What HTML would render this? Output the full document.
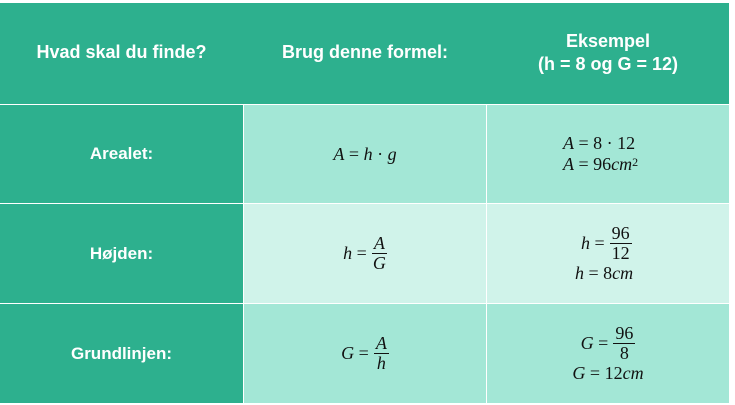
<!DOCTYPE html>
<html><head><style>
body{margin:0;width:735px;height:405px;background:#fff;position:relative;overflow:hidden}
.c{position:absolute;display:flex;align-items:center;justify-content:center;flex-direction:column;box-sizing:border-box}
.h{background:#2db08e;color:#fff;font:bold 18px "Liberation Sans",sans-serif;text-align:center;line-height:23px}
.l{background:#2db08e;color:#fff;font:bold 17px "Liberation Sans",sans-serif}
.a{background:#a3e7d6}.b{background:#d0f3ea}
.m{font:18px "Liberation Serif",serif;color:#111;white-space:nowrap;line-height:21px;display:flex;align-items:center}
.m i{font-style:italic}
.f{display:inline-flex;flex-direction:column;align-items:center;margin-left:5px;line-height:19px}
.f span:first-child{border-bottom:1px solid #111;padding:0 2px}
sup{font-size:12px;position:relative;top:-3px;vertical-align:top;line-height:12px}
</style></head><body>
<div class="c h" style="left:0;top:3px;width:729px;height:101px"></div>
<div class="c h" style="left:0;top:3px;width:243px;height:101px;padding-bottom:2px">Hvad skal du finde?</div>
<div class="c h" style="left:244px;top:3px;width:242px;height:101px;padding-bottom:2px">Brug denne formel:</div>
<div class="c h" style="left:487px;top:3px;width:242px;height:101px;padding-bottom:2px">Eksempel<br>(h = 8 og G = 12)</div>

<div class="c l" style="left:0;top:105px;width:243px;height:98px">Arealet:</div>
<div class="c a" style="left:244px;top:105px;width:242px;height:98px"><div class="m"><i>A</i>&nbsp;=&nbsp;<i>h</i>&nbsp;·&nbsp;<i>g</i></div></div>
<div class="c a" style="left:487px;top:105px;width:242px;height:98px;align-items:flex-start;padding-left:76px"><div class="m"><i>A</i>&nbsp;=&nbsp;8&nbsp;·&nbsp;12</div><div class="m"><i>A</i>&nbsp;=&nbsp;96<i>cm</i><sup>2</sup></div></div>

<div class="c l" style="left:0;top:204px;width:243px;height:99px">Højden:</div>
<div class="c b" style="left:244px;top:204px;width:242px;height:99px"><div class="m"><i>h</i>&nbsp;=<span class="f"><span><i>A</i></span><span><i>G</i></span></span></div></div>
<div class="c b" style="left:487px;top:204px;width:242px;height:99px;align-items:flex-start;padding-left:88px"><div class="m" style="margin-left:6px"><i>h</i>&nbsp;=<span class="f"><span>96</span><span>12</span></span></div><div class="m"><i>h</i>&nbsp;=&nbsp;8<i>cm</i></div></div>

<div class="c l" style="left:0;top:304px;width:243px;height:99px">Grundlinjen:</div>
<div class="c a" style="left:244px;top:304px;width:242px;height:99px"><div class="m"><i>G</i>&nbsp;=<span class="f"><span><i>A</i></span><span><i>h</i></span></span></div></div>
<div class="c a" style="left:487px;top:304px;width:242px;height:99px"><div class="m"><i>G</i>&nbsp;=<span class="f"><span>96</span><span>8</span></span></div><div class="m"><i>G</i>&nbsp;=&nbsp;12<i>cm</i></div></div>
</body></html>
